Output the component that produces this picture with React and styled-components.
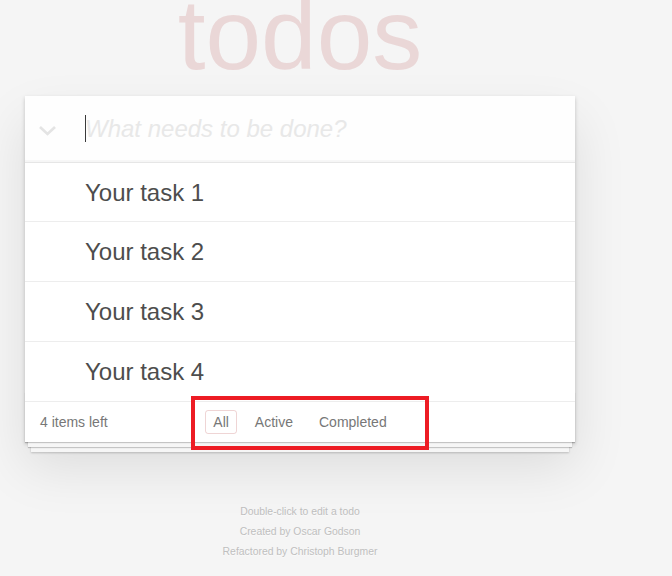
import React from "react";
import styled, { createGlobalStyle } from "styled-components";

const Global = createGlobalStyle`
  html, body { margin: 0; padding: 0; }
  body {
    background: #f5f5f5;
    font-family: "Helvetica Neue", Helvetica, "Liberation Sans", Arial, sans-serif;
    color: #4d4d4d;
    -webkit-font-smoothing: antialiased;
  }
`;

const Page = styled.div`
  position: relative;
  display: flow-root;
  width: 550px;
  margin-left: 25px;
`;

const Title = styled.h1`
  margin: -16px 0 0;
  height: 100px;
  font-size: 100px;
  line-height: 100px;
  font-weight: 100;
  text-align: center;
  color: rgba(175, 47, 47, 0.15);
  text-rendering: optimizeLegibility;
`;

const App = styled.section`
  position: relative;
  margin-top: 12px;
  background: #fff;
  box-shadow: 0 2px 4px 0 rgba(0, 0, 0, 0.2), 0 25px 50px 0 rgba(0, 0, 0, 0.1);
`;

const Header = styled.header`
  display: flex;
  align-items: center;
  background: rgba(0, 0, 0, 0.003);
  box-shadow: inset 0 -2px 1px rgba(0, 0, 0, 0.03);
`;

const Toggle = styled.div`
  width: 60px;
  flex: none;
  display: flex;
  align-items: center;
  padding-left: 13px;
  box-sizing: border-box;
  padding-top: 3px;
`;

const InputWrap = styled.div`
  position: relative;
  flex: 1;
  display: flex;
`;

const NewTodo = styled.input`
  flex: 1;
  min-width: 0;
  border: none;
  outline: none;
  background: transparent;
  font-family: inherit;
  font-size: 24px;
  line-height: 1.4em;
  height: 33.6px;
  padding: 16px 16px 16px 0;
  color: inherit;
  &::placeholder {
    font-style: italic;
    font-weight: 300;
    color: #e8e8e8;
  }
`;

const Caret = styled.span`
  position: absolute;
  left: 0;
  top: 19px;
  width: 1px;
  height: 27px;
  background: #3a3a3a;
`;

const List = styled.ul`
  margin: 0;
  padding: 0;
  list-style: none;
  border-top: 1px solid #e6e6e6;
`;

const Item = styled.li`
  font-size: 24px;
  line-height: 1.2;
  padding: 16px 60px 14px 60px;
  border-bottom: 1px solid #ededed;
  color: #4d4d4d;
`;

const Footer = styled.footer`
  position: relative;
  display: grid;
  grid-template-columns: 1fr auto 1fr;
  grid-template-rows: 20px;
  align-items: center;
  padding: 10px 15px;
  height: 20px;
  color: #777;
  font-size: 14px;
  text-align: left;
  &::before {
    content: "";
    position: absolute;
    right: 0;
    bottom: 0;
    left: 0;
    height: 50px;
    overflow: hidden;
    box-shadow: 0 1px 1px rgba(0, 0, 0, 0.2), 0 8px 0 -3px #f6f6f6,
      0 9px 1px -3px rgba(0, 0, 0, 0.2), 0 16px 0 -6px #f6f6f6,
      0 17px 2px -6px rgba(0, 0, 0, 0.2);
    pointer-events: none;
  }
`;

const Count = styled.span`
  position: relative;
`;

const Filters = styled.ul`
  position: relative;
  display: flex;
  align-items: center;
  gap: 4px;
  margin: 0;
  padding: 0;
  list-style: none;
`;

const Filter = styled.li`
  margin: 3px;
  padding: 3px 7px;
  border: 1px solid ${(p) => (p.$selected ? "rgba(175, 47, 47, 0.2)" : "transparent")};
  border-radius: 3px;
  color: inherit;
  line-height: 16px;
`;

const Info = styled.footer`
  margin-top: 65px;
  color: #bfbfbf;
  font-size: 10.4px;
  text-shadow: 0 1px 0 rgba(255, 255, 255, 0.5);
  text-align: center;
`;

const InfoLine = styled.p`
  margin: 10px 0;
  line-height: 10px;
`;

const Highlight = styled.div`
  position: absolute;
  left: 166px;
  top: 396px;
  width: 238px;
  height: 54px;
  box-sizing: border-box;
  border: 4px solid #ed1c24;
  pointer-events: none;
`;

const tasks = ["Your task 1", "Your task 2", "Your task 3", "Your task 4"];

export default function TodoApp() {
  return (
    <>
      <Global />
      <Page>
        <Title>todos</Title>
        <App>
          <Header>
            <Toggle>
              <svg width="19" height="11" viewBox="0 0 19 11">
                <polyline
                  points="2,2 9.5,9 17,2"
                  fill="none"
                  stroke="#e4e4e4"
                  strokeWidth="2.6"
                />
              </svg>
            </Toggle>
            <InputWrap>
              <Caret />
              <NewTodo placeholder="What needs to be done?" />
            </InputWrap>
          </Header>
          <List>
            {tasks.map((t) => (
              <Item key={t}>{t}</Item>
            ))}
          </List>
          <Footer>
            <Count>4 items left</Count>
            <Filters>
              <Filter $selected>All</Filter>
              <Filter>Active</Filter>
              <Filter>Completed</Filter>
            </Filters>
            <span />
          </Footer>
        </App>
        <Info>
          <InfoLine>Double-click to edit a todo</InfoLine>
          <InfoLine>Created by Oscar Godson</InfoLine>
          <InfoLine>Refactored by Christoph Burgmer</InfoLine>
        </Info>
        <Highlight />
      </Page>
    </>
  );
}
